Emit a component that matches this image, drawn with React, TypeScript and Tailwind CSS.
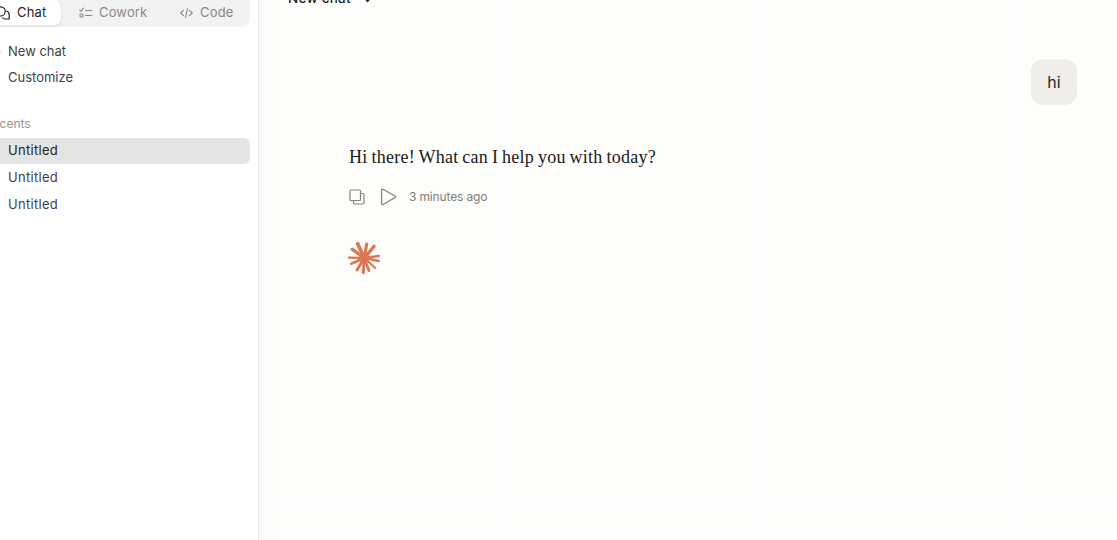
import React from 'react';

// end x, end y, stroke width
const rays = [
  [53, 26, 11], [80, 27, 9], [102, 34, 10], [37, 43, 10], [27, 68, 7], [34, 86, 8],
  [51, 105, 9], [70, 113, 9], [87, 107, 8], [106, 99, 6], [116, 78, 8], [116, 63, 8],
];

const ChatIcon = () => (
  <svg className="h-[14px] w-[15px] shrink-0" viewBox="0 0 15 14" fill="none" stroke="#1f1f1e" strokeWidth="1.2" strokeLinejoin="round">
    <path d="M1 10V5.200a4.600 4.600 0 1 1 4.600 4.800z" />
    <path d="M11.200 5a3.900 3.900 0 0 1 3 3.800V13h-4a3.800 3.800 0 0 1-3-1.500" />
  </svg>
);

const TasksIcon = () => (
  <svg className="h-[12px] w-[14px] shrink-0" viewBox="0 0 14 12" fill="none" stroke="currentColor" strokeWidth="1.1" strokeLinecap="round" strokeLinejoin="round">
    <path d="M.7 3.100 2 4.300 4.300 1.200M6.500 3.500h6.300M6.500 8.500h6.300" />
    <rect x="1" y="7" width="3" height="3" rx=".7" />
  </svg>
);

const CodeIcon = () => (
  <svg className="h-[12px] w-[13px] shrink-0" viewBox="0 0 13 12" fill="none" stroke="currentColor" strokeWidth="1.1" strokeLinecap="round" strokeLinejoin="round">
    <path d="M3.500 3.300.7 6l2.800 2.700M9.500 3.300 12.300 6 9.500 8.700M7.500 1.500l-2 9" />
  </svg>
);

const Burst = () => (
  <svg className="h-[45px] w-[50px]" viewBox="0 0 150 135" stroke="#d97757" strokeLinecap="round">
    {rays.map(([x, y, width]) => (
      <line key={`${x}-${y}`} x1="73" y1="69" x2={x} y2={y} strokeWidth={width} />
    ))}
    <circle cx="73" cy="69" r="15" fill="#d97757" stroke="none" />
  </svg>
);

const Sidebar = () => (
  <aside className="h-full w-[259px] shrink-0 overflow-hidden border-r border-[#e5e5e3] bg-white text-[13px] text-[#3f3f3d]">
    <nav className="-ml-4 flex h-[27px] w-[266px] rounded-b-lg bg-[#f2f2f2] text-[#898986]">
      <div className="flex h-[26px] w-[78px] items-center gap-[7px] rounded-b-lg rounded-t-lg border border-t-0 border-[#e6e6e5] bg-white pl-[10px] text-[#1f1f1e] shadow-xs">
        <ChatIcon />
        <span className="tracking-[0.2px]">Chat</span>
      </div>
      <div className="ml-[17px] flex h-[26px] w-[101px] items-center gap-[6px]">
        <TasksIcon />
        <span className="tracking-[0.15px]">Cowork</span>
      </div>
      <div className="flex h-[26px] items-center gap-[7px]">
        <CodeIcon />
        <span className="tracking-[0.2px]">Code</span>
      </div>
    </nav>
    <div className="flex pt-[11px]">
      <span className="mt-[9px] -ml-[8px] h-[9px] w-[9px] rounded-full bg-[#e5e5e4]" />
      <span className="ml-[7px] h-[26px] leading-[26px]">New chat</span>
    </div>
    <div className="h-[26px] pl-2 leading-[26px]">Customize</div>
    <div className="mt-[24px] -ml-[15px] h-[20px] text-[12px] leading-[20px] text-[#959591]">Recents</div>
    <div className="mt-[4px] mr-2 h-[26px] rounded-r-[6px] bg-[#e4e4e4] pl-2 leading-[25px] tracking-[0.3px] text-[#1f1f1e]">Untitled</div>
    <div className="mt-px h-[26px] pl-2 leading-[25px] tracking-[0.3px]">Untitled</div>
    <div className="mt-px h-[26px] pl-2 leading-[25px] tracking-[0.3px]">Untitled</div>
  </aside>
);

const App: React.FC = () => {
  return (
    <div className="flex h-[540px] w-[1117px] overflow-hidden bg-[#fdfdfb] font-['Inter',sans-serif]">
      <Sidebar />
      <main className="flex min-w-0 flex-1 flex-col bg-linear-to-r from-[#f9f9f8] to-[#fdfdfb] to-[14px]">
        <header className="flex h-[27px] pl-[29px] text-[13.500px] font-medium text-[#1f1f1e]">
          <span className="-mt-[12px] h-5 leading-5 tracking-[0.25px]">New chat</span>
          <svg className="-mt-[5px] ml-[12px] h-[8px] w-[9px]" viewBox="0 0 9 8" fill="none" stroke="currentColor" strokeWidth="1.3">
            <path d="m1.500 3 3 3.500 3-3.500" />
          </svg>
        </header>
        <div className="flex justify-end pt-[32px] pr-[40px]">
          <div className="flex h-[46px] w-[46px] items-center justify-center rounded-xl bg-[#efeeeb] text-[16px] text-[#1f1f1e]">hi</div>
        </div>
        <div className="pt-[39px] pl-[90px]">
          <p className="h-[26px] font-['Liberation_Serif',serif] text-[18px] leading-[26px] tracking-[0.26px] whitespace-nowrap text-[#1a1a19] [word-spacing:-0.9px]">
            Hi there! What can I help you with today?
          </p>
          <div className="mt-[17px] flex h-5 items-center text-[12px] text-[#7d7d79]">
            <svg className="h-[16px] w-[16px]" viewBox="0 0 16 16" fill="none" stroke="#858581" strokeWidth="1.2" strokeLinejoin="round">
              <rect x="1" y="1" width="10.5" height="10.5" rx="1" />
              <path d="M11.500 4.500H14a1 1 0 0 1 1 1V14a1 1 0 0 1-1 1H5.500a1 1 0 0 1-1-1v-2.500" />
            </svg>
            <svg className="ml-[15px] h-[18px] w-[17px]" viewBox="0 0 17 18" fill="none" stroke="#858581" strokeWidth="1.3" strokeLinejoin="round">
              <path d="M1.600 2.200c0-.8.7-1.200 1.400-.9l12 6.700c.7.400.7 1.200 0 1.600l-12 6.900c-.7.400-1.400 0-1.400-.8z" />
            </svg>
            <span className="ml-[12px] tracking-[-0.15px] whitespace-nowrap">3 minutes ago</span>
          </div>
          <div className="mt-[28px] -ml-[9px]">
            <Burst />
          </div>
        </div>
      </main>
    </div>
  );
};

export default App;
